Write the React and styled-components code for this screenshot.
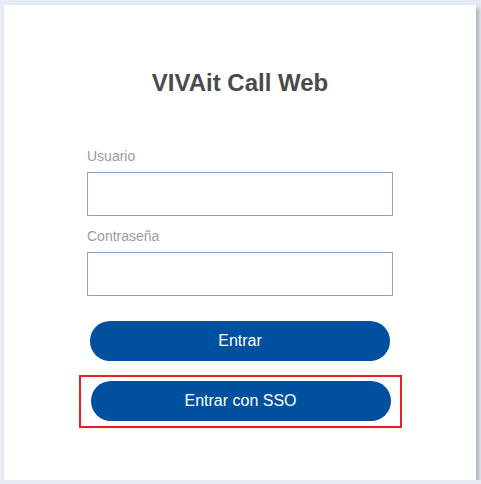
import React from "react";
import styled, { createGlobalStyle } from "styled-components";

const Global = createGlobalStyle`
  html, body {
    margin: 0;
    padding: 0;
    background: #e7ebf3;
    font-family: "Liberation Sans", Arial, sans-serif;
  }
`;

const Page = styled.div`
  padding: 5px 0 0 4px;
`;

const Card = styled.main`
  width: 472px;
  height: 475px;
  box-sizing: border-box;
  background: #fff;
  box-shadow: 3px 3px 4px rgba(60, 70, 90, 0.35);
  padding-top: 64px;
`;

const Title = styled.h1`
  margin: 0;
  font-size: 24px;
  line-height: 28px;
  font-weight: bold;
  color: #4a4a4a;
  text-align: center;
`;

const Form = styled.form`
  width: 306px;
  margin: 51px auto 0;
  display: flex;
  flex-direction: column;
`;

const Label = styled.label`
  font-size: 14px;
  line-height: 16px;
  color: #9b9b9b;
  margin-bottom: 8px;
`;

const Input = styled.input`
  box-sizing: border-box;
  width: 306px;
  height: 44px;
  border: 1px solid #84a2cc;
  border-radius: 0;
  outline: none;
  padding: 0 8px;
  font: inherit;
  margin-bottom: ${(p) => p.$gap}px;
`;

const Button = styled.button`
  width: 300px;
  height: 40px;
  border: none;
  border-radius: 20px;
  background: #0050a0;
  color: #fff;
  font-family: "Liberation Sans", Arial, sans-serif;
  font-size: 16px;
  cursor: pointer;
  align-self: center;
`;

const Highlight = styled.div`
  box-sizing: border-box;
  width: 323px;
  margin: 14px 0 0 -8px;
  padding: 4px 0 5px;
  border: 2px solid #e5202a;
  display: flex;
  justify-content: center;
`;

export default function App() {
  return (
    <Page>
      <Global />
      <Card>
        <Title>VIVAit Call Web</Title>
        <Form onSubmit={(e) => e.preventDefault()}>
          <Label htmlFor="user">Usuario</Label>
          <Input id="user" type="text" $gap={12} />
          <Label htmlFor="pass">Contraseña</Label>
          <Input id="pass" type="password" $gap={25} />
          <Button type="submit">Entrar</Button>
          <Highlight>
            <Button type="button">Entrar con SSO</Button>
          </Highlight>
        </Form>
      </Card>
    </Page>
  );
}
